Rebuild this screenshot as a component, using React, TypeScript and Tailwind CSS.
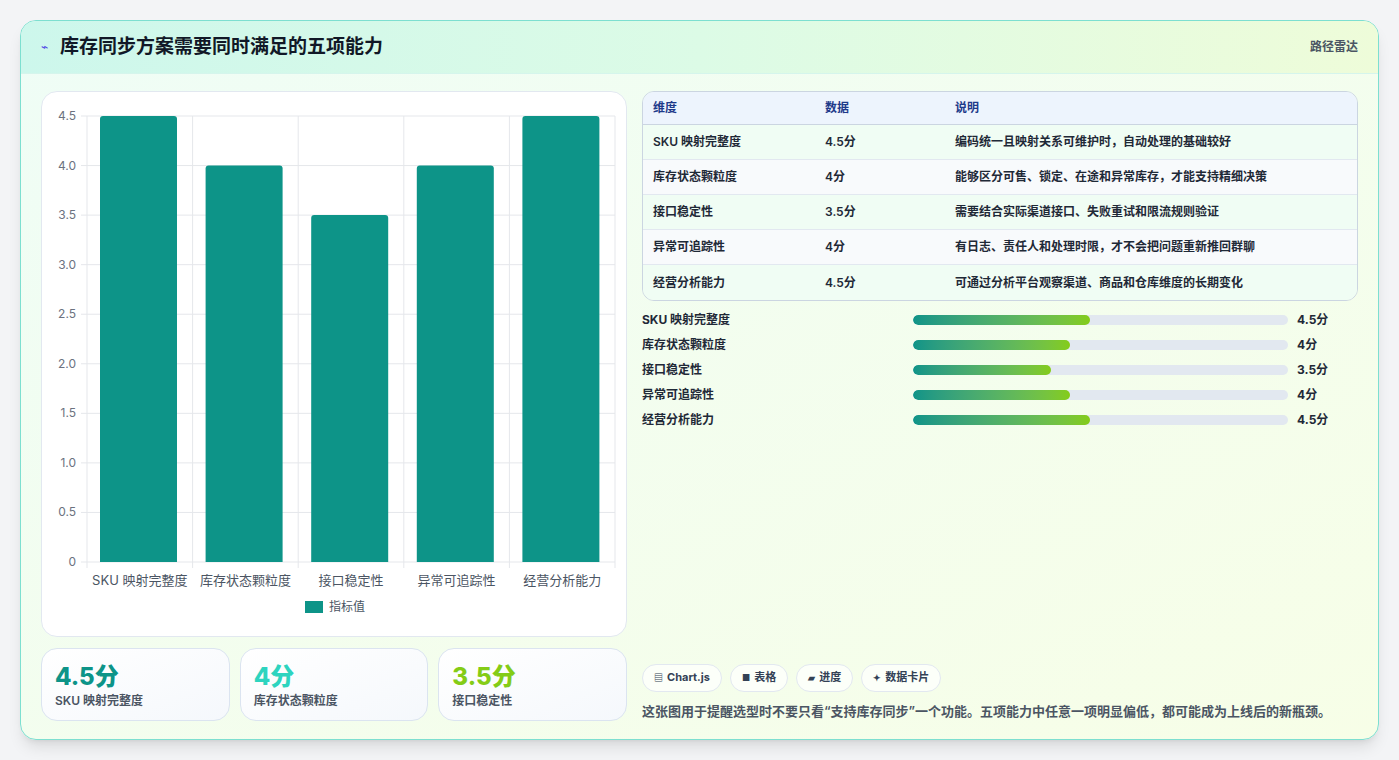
import React from "react"

const rows = [
    { name: "SKU 映射完整度", value: 4.5, note: "编码统一且映射关系可维护时，自动处理的基础较好" },
    { name: "库存状态颗粒度", value: 4, note: "能够区分可售、锁定、在途和异常库存，才能支持精细决策" },
    { name: "接口稳定性", value: 3.5, note: "需要结合实际渠道接口、失败重试和限流规则验证" },
    { name: "异常可追踪性", value: 4, note: "有日志、责任人和处理时限，才不会把问题重新推回群聊" },
    { name: "经营分析能力", value: 4.5, note: "可通过分析平台观察渠道、商品和仓库维度的长期变化" },
]

const font = { fontFamily: "Inter, 'Noto Sans CJK SC', sans-serif" }

/** Bar chart drawn like the Chart.js canvas it mimics. */
const BarChart = () => {
    const left = 45
    const right = 573
    const top = 24
    const bottom = 470
    const step = (bottom - top) / 9
    const band = (right - left) / 5
    const ticks = [0, 0.5, 1, 1.5, 2, 2.5, 3, 3.5, 4, 4.5]
    return (
        <svg width="586" height="544" className="block" style={font}>
            {ticks.map((t, i) => {
                const y = bottom - i * step
                return (
                    <g key={t}>
                        <line x1={left - 6} x2={right} y1={y} y2={y} stroke="#e5e7eb" />
                        <text x={34} y={y + 4} textAnchor="end" fontSize="12" fill="#6b7280">{t === 0 ? "0" : t.toFixed(1)}</text>
                    </g>
                )
            })}
            {[0, 1, 2, 3, 4, 5].map((i) => (
                <line key={i} x1={left + i * band} x2={left + i * band} y1={top} y2={bottom + 6} stroke="#e5e7eb" />
            ))}
            {rows.map((r, i) => {
                const h = (r.value / 0.5) * step
                return (
                    <g key={r.name}>
                        <path
                            d={`M${left + i * band + 13} ${bottom} V${bottom - h + 3} q0 -3 3 -3 H${left + i * band + 87} q3 0 3 3 V${bottom} Z`}
                            fill="#0d9488"
                        />
                        <text x={left + i * band + band / 2} y={493} textAnchor="middle" fontSize="13" fill="#4b5563">{r.name}</text>
                    </g>
                )
            })}
            <rect x={263} y={509} width={18} height={12} fill="#0d9488" />
            <text x={287} y={519} fontSize="12" fill="#4b5563">指标值</text>
        </svg>
    )
}

const stats = [
    { value: "4.5分", label: "SKU 映射完整度", color: "text-[#0d9488]" },
    { value: "4分", label: "库存状态颗粒度", color: "text-[#2dd4bf]" },
    { value: "3.5分", label: "接口稳定性", color: "text-[#84cc16]" },
]

const pills = [
    { icon: "▤", label: "Chart.js" },
    { icon: "■", label: "表格" },
    { icon: "▰", label: "进度" },
    { icon: "✦", label: "数据卡片" },
]

export default function App() {
    return (
        <div className="min-h-screen bg-[#f3f4f6] p-5" style={font}>
            <div className="flex h-[720px] flex-col overflow-hidden rounded-2xl border border-[#7ddfd0] bg-gradient-to-br from-[#effdf6] to-[#f7fee7] shadow-lg">
                <div className="flex h-[55px] items-center justify-between border-b border-[#d5f5ec] bg-gradient-to-r from-[#cdf7ec] via-[#dcfbe6] to-[#eefcd9] px-5">
                    <div className="flex items-center gap-3">
                        <span className="text-xs text-[#4f46e5]">⌁</span>
                        <h1 className="text-[19px] font-bold text-[#111827]">库存同步方案需要同时满足的五项能力</h1>
                    </div>
                    <span className="text-xs font-semibold text-[#4b5563]">路径雷达</span>
                </div>

                <div className="flex flex-1 gap-[15px] px-5 pb-[18px] pt-[17px]">
                    <div className="flex w-[586px] flex-col gap-[11px]">
                        <div className="rounded-2xl border border-[#e2e8f0] bg-white">
                            <BarChart />
                        </div>
                        <div className="flex gap-[10px]">
                            {stats.map((s) => (
                                <div key={s.label} className="flex h-[73px] w-[189px] flex-col justify-center rounded-2xl border border-[#dbe4f0] bg-gradient-to-br from-white to-[#f5f8fc] px-[13px]">
                                    <div className={`text-[24px] font-extrabold leading-8 ${s.color}`}>{s.value}</div>
                                    <div className="text-xs font-semibold text-[#4b5563]">{s.label}</div>
                                </div>
                            ))}
                        </div>
                    </div>

                    <div className="flex flex-1 flex-col">
                        <div className="overflow-hidden rounded-xl border border-[#cbd5e1] text-xs">
                            <div className="flex h-[33px] items-center border-b border-[#cbd5e1] bg-[#edf4fd] font-bold text-[#1e3a8a]">
                                <div className="w-[182px] pl-[10px]">维度</div>
                                <div className="w-[130px]">数据</div>
                                <div>说明</div>
                            </div>
                            {rows.map((r, i) => (
                                <div key={r.name} className={`flex h-[35px] items-center font-semibold text-[#1f2937] ${i < 4 ? "border-b border-[#e2e8f0]" : ""} ${i % 2 ? "bg-[#f8fafc]" : "bg-[#f0fdf4]"}`}>
                                    <div className="w-[182px] pl-[10px]">{r.name}</div>
                                    <div className="w-[130px]">{r.value}分</div>
                                    <div>{r.note}</div>
                                </div>
                            ))}
                        </div>

                        <div className="mt-[10px] flex flex-col gap-[7px]">
                            {rows.map((r) => (
                                <div key={r.name} className="flex h-[18px] items-center text-xs font-bold text-[#1f2937]">
                                    <div className="w-[271px]">{r.name}</div>
                                    <div className="h-[10px] w-[375px] overflow-hidden rounded-full bg-[#e2e8f0]">
                                        <div
                                            className="h-full rounded-full bg-gradient-to-r from-[#0d9488] to-[#84cc16]"
                                            style={{ width: `${r.value * 39.3}px` }}
                                        />
                                    </div>
                                    <div className="pl-[9px]">{r.value}分</div>
                                </div>
                            ))}
                        </div>

                        <div className="mt-auto flex flex-col gap-[10px]">
                            <div className="flex gap-2">
                                {pills.map((p) => (
                                    <span key={p.label} className="flex h-[28px] items-center gap-1 rounded-full border border-[#e2e8f0] bg-white/70 px-[11px] text-[11px] font-bold text-[#334155]">
                                        <span className="text-[9px]">{p.icon}</span>
                                        {p.label}
                                    </span>
                                ))}
                            </div>
                            <p className="text-[13px] font-semibold text-[#4b5563]">
                                这张图用于提醒选型时不要只看“支持库存同步”一个功能。五项能力中任意一项明显偏低，都可能成为上线后的新瓶颈。
                            </p>
                        </div>
                    </div>
                </div>
            </div>
        </div>
    )
}
